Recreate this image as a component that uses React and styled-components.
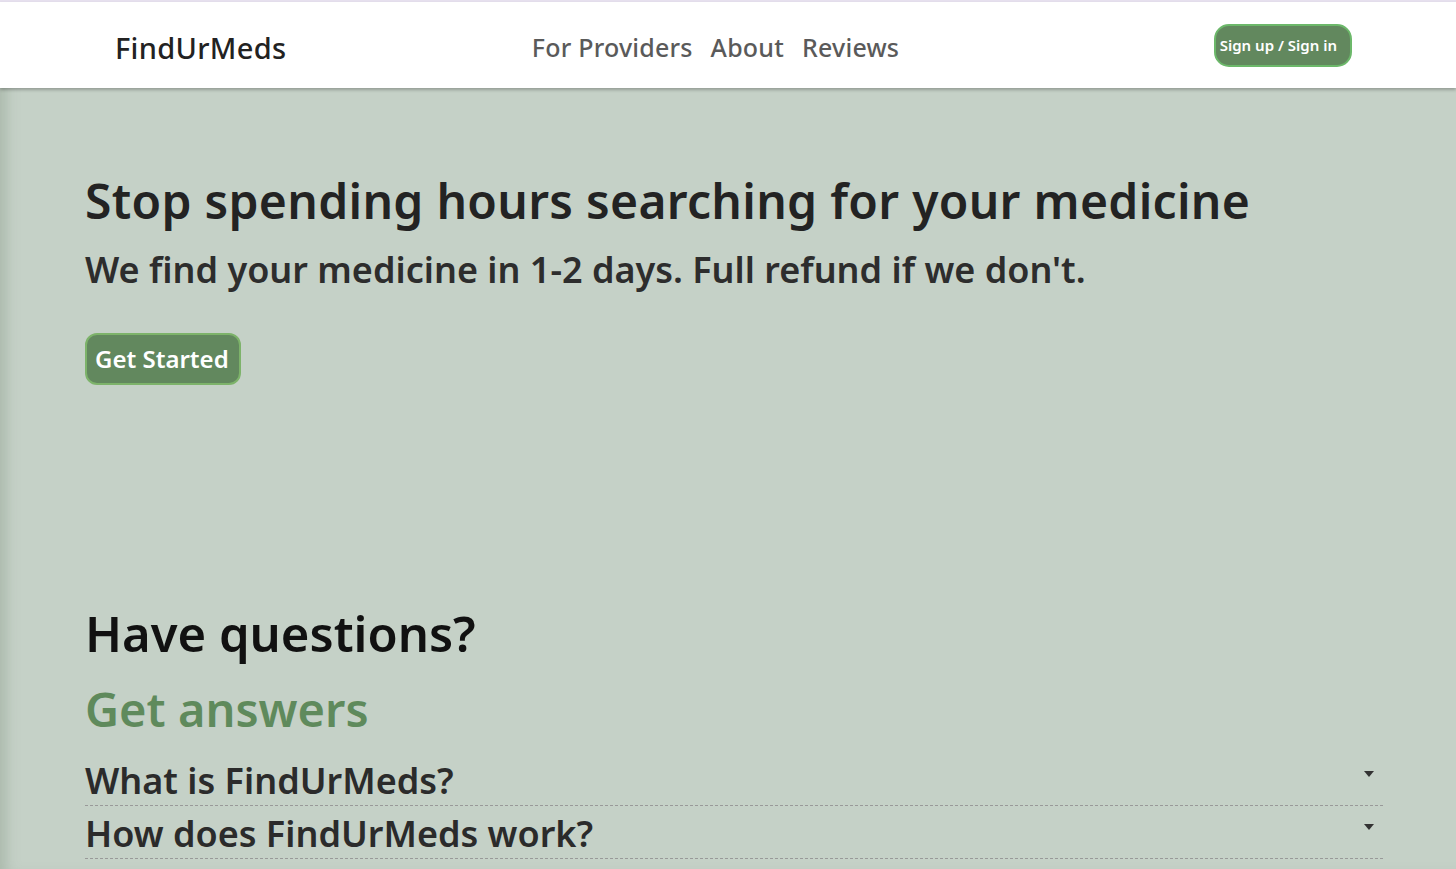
import styled, { createGlobalStyle } from "styled-components";

const GlobalStyle = createGlobalStyle`
  html, body {
    margin: 0;
    padding: 0;
    background: #c5d1c7;
    font-family: "Noto Sans", "Open Sans", sans-serif;
  }
  * { box-sizing: border-box; }
`;

const Page = styled.div`
  min-height: 869px;
  background: #c5d1c7;
  box-shadow: inset 14px 0 14px -8px rgba(120, 140, 120, 0.35);
  border-top: 2px solid #e6e0ee;
`;

const Header = styled.header`
  height: 86px;
  background: #fff;
  display: grid;
  grid-template-columns: 1fr auto 1fr;
  align-items: center;
  padding: 0 104px 0 115px;
  box-shadow: 0 2px 3px rgba(0, 0, 0, 0.25);
  position: relative;
`;

const Logo = styled.div`
  font-size: 29px;
  font-weight: 500;
  color: #222;
  letter-spacing: 0.3px;
  margin-top: 4px;
`;

const Nav = styled.nav`
  display: flex;
  gap: 18px;
  padding-right: 36px;
  margin-top: 4px;
`;

const NavLink = styled.a`
  font-size: 25px;
  font-weight: 500;
  color: #5a5a5a;
  letter-spacing: 0.2px;
  cursor: pointer;
`;

const Right = styled.div`
  display: flex;
  justify-content: flex-end;
`;

const Button = styled.button`
  background: #62885e;
  color: #fff;
  border: 2px solid ${(p) => (p.$big ? "#7db36a" : "#6cb86a")};
  border-radius: ${(p) => (p.$big ? "12px" : "15px")};
  font-family: inherit;
  font-weight: 600;
  font-size: ${(p) => (p.$big ? "24px" : "15px")};
  padding: ${(p) => (p.$big ? "7px 10px 8px 8px" : "9px 13px 10px 4px")};
  cursor: pointer;
`;

const Main = styled.main`
  padding: 80px 73px 0 85px;
`;

const Title = styled.h1`
  margin: 0;
  font-size: 48px;
  font-weight: 600;
  color: #232323;
  letter-spacing: 0.3px;
`;

const Sub = styled.h2`
  margin: 12px 0 0;
  font-size: 36px;
  font-weight: 600;
  color: #2d2d2d;
`;

const CtaRow = styled.div`
  margin-top: 39px;
`;

const Faq = styled.section`
  margin-top: 209px;
`;

const FaqTitle = styled.h2`
  margin: 0;
  font-size: ${(p) => (p.$green ? "47px" : "49px")};
  font-weight: 600;
  color: ${(p) => (p.$green ? "#5f8a5c" : "#111")};
  line-height: 1.6;
`;

const List = styled.div`
  margin-top: 5px;
`;

const Item = styled.div`
  display: flex;
  justify-content: space-between;
  align-items: flex-start;
  border-bottom: 1px dashed #999;
  height: 53px;
`;

const Question = styled.div`
  font-size: 36px;
  font-weight: 600;
  color: #2b2b2b;
  line-height: 53px;
  margin-top: 1px;
`;

const Caret = styled.span`
  width: 0;
  height: 0;
  border-left: 5px solid transparent;
  border-right: 5px solid transparent;
  border-top: 6px solid #333;
  margin: 18px 9px 0 0;
`;

export default function App() {
  return (
    <Page>
      <GlobalStyle />
      <Header>
        <Logo>FindUrMeds</Logo>
        <Nav>
          <NavLink>For Providers</NavLink>
          <NavLink>About</NavLink>
          <NavLink>Reviews</NavLink>
        </Nav>
        <Right>
          <Button>Sign up / Sign in</Button>
        </Right>
      </Header>
      <Main>
        <Title>Stop spending hours searching for your medicine</Title>
        <Sub>We find your medicine in 1-2 days. Full refund if we don't.</Sub>
        <CtaRow>
          <Button $big>Get Started</Button>
        </CtaRow>
        <Faq>
          <FaqTitle>Have questions?</FaqTitle>
          <FaqTitle $green>Get answers</FaqTitle>
          <List>
            <Item>
              <Question>What is FindUrMeds?</Question>
              <Caret />
            </Item>
            <Item>
              <Question>How does FindUrMeds work?</Question>
              <Caret />
            </Item>
          </List>
        </Faq>
      </Main>
    </Page>
  );
}
